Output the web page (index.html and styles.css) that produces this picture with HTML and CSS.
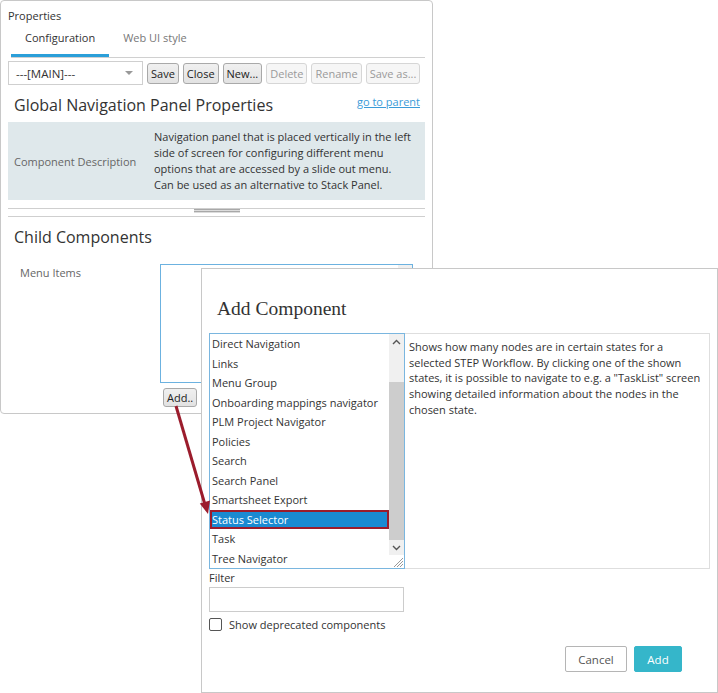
FILE: index.html
```html
<!DOCTYPE html>
<html>
<head>
<meta charset="utf-8">
<title>Properties</title>
<link rel="stylesheet" href="styles.css">
</head>
<body>
<div class="panel">
  <div class="panel-title">Properties</div>
  <div class="tabs">
    <div class="tab active">Configuration</div>
    <div class="tab">Web UI style</div>
  </div>
  <div class="toolbar">
    <div class="select"><span>---[MAIN]---</span><span class="caret"></span></div>
    <button class="btn">Save</button>
    <button class="btn">Close</button>
    <button class="btn">New...</button>
    <button class="btn disabled">Delete</button>
    <button class="btn disabled">Rename</button>
    <button class="btn disabled">Save as...</button>
  </div>
  <div class="head-row">
    <h2 class="heading">Global Navigation Panel Properties</h2>
    <a class="parent-link" href="#">go to parent</a>
  </div>
  <div class="desc-row">
    <div class="desc-label">Component Description</div>
    <div class="desc-text">Navigation panel that is placed vertically in the left<br>side of screen for configuring different menu<br>options that are accessed by a slide out menu.<br>Can be used as an alternative to Stack Panel.</div>
  </div>
  <div class="splitter"><div class="grip"></div></div>
  <h2 class="heading child-heading">Child Components</h2>
  <div class="field-row">
    <div class="field-label">Menu Items</div>
    <div class="field-col">
      <div class="textarea"><div class="ta-scroll"></div></div>
      <button class="btn add-small">Add..</button>
    </div>
  </div>
</div>

<div class="dialog">
  <div class="dialog-title">Add Component</div>
  <div class="dialog-body">
    <div class="listbox">
      <div class="items">
        <div class="item">Direct Navigation</div>
        <div class="item">Links</div>
        <div class="item">Menu Group</div>
        <div class="item">Onboarding mappings navigator</div>
        <div class="item">PLM Project Navigator</div>
        <div class="item">Policies</div>
        <div class="item">Search</div>
        <div class="item">Search Panel</div>
        <div class="item">Smartsheet Export</div>
        <div class="item selected">Status Selector</div>
        <div class="item">Task</div>
        <div class="item">Tree Navigator</div>
      </div>
      <div class="scrollbar">
        <div class="sb-btn"><svg width="9" height="6" viewBox="0 0 9 6"><polyline points="1,5 4.5,1.5 8,5" fill="none" stroke="#555" stroke-width="1.4"/></svg></div>
        <div class="sb-track"></div>
        <div class="sb-thumb"></div>
        <div class="sb-btn down"><svg width="9" height="6" viewBox="0 0 9 6"><polyline points="1,1 4.5,4.5 8,1" fill="none" stroke="#555" stroke-width="1.4"/></svg></div>
        <div class="sb-corner"><svg width="12" height="12" viewBox="0 0 12 12"><path d="M11 2 L2 11 M11 5 L5 11 M11 8 L8 11" stroke="#999" stroke-width="1"/></svg></div>
      </div>
    </div>
    <div class="info">Shows how many nodes are in certain states for a<br>selected STEP Workflow. By clicking one of the shown<br>states, it is possible to navigate to e.g. a "TaskList" screen<br>showing detailed information about the nodes in the<br>chosen state.</div>
  </div>
  <div class="filter-label">Filter</div>
  <div class="filter-input"></div>
  <label class="check-row"><span class="checkbox"></span><span>Show deprecated components</span></label>
  <div class="dialog-actions">
    <button class="action cancel">Cancel</button>
    <button class="action primary">Add</button>
  </div>
</div>

<svg class="annotation" width="718" height="693" viewBox="0 0 718 693">
  <line x1="176" y1="406" x2="204.5" y2="503" stroke="#9b1c2c" stroke-width="3"/>
  <polygon points="208,514 199.8,503.5 210,500.5" fill="#9b1c2c"/>
</svg>
</body>
</html>
```

FILE: styles.css
```css
* { box-sizing: border-box; }

body {
  margin: 0;
  width: 718px;
  height: 693px;
  position: relative;
  overflow: hidden;
  background: #fff;
  color: #333;
  font-family: "Open Sans", "Noto Sans", sans-serif;
  font-size: 11px;
}

.panel {
  width: 433px;
  height: 414px;
  border: 1px solid #c8c8c8;
  border-radius: 4px;
  padding: 5px 7px 0 7px;
}

.panel-title {
  line-height: 20px;
  color: #333;
}

.tabs {
  display: flex;
  margin-left: 3px;
  border-bottom: 1px solid #d0d0d0;
}

.tab {
  line-height: 24px;
  padding: 0 14px 4px 14px;
  border-bottom: 3px solid transparent;
  color: #777;
  font-size: 11px;
  white-space: nowrap;
}

.tab.active {
  color: #333;
  border-bottom-color: #2b9fd9;
}

.toolbar {
  display: flex;
  align-items: center;
  gap: 4px;
  margin-top: 3px;
}

.select {
  flex-shrink: 0;
  width: 135px;
  height: 24px;
  border: 1px solid #cfcfcf;
  display: flex;
  align-items: center;
  justify-content: space-between;
  padding: 0 9px 0 7px;
  font-size: 11.5px;
  color: #333;
}

.caret {
  width: 0;
  height: 0;
  border-left: 4px solid transparent;
  border-right: 4px solid transparent;
  border-top: 4px solid #999;
}

.btn {
  flex-shrink: 0;
  white-space: nowrap;
  font-family: inherit;
  font-size: 11px;
  height: 21px;
  padding: 0 3px;
  border: 1px solid #a9a9a9;
  border-radius: 3px;
  background: linear-gradient(#f0f0f0, #e2e2e2);
  color: #222;
  line-height: 19px;
}

.btn.disabled {
  border-color: #d6d6d6;
  background: #f6f6f6;
  color: #9a9a9a;
}

.head-row {
  display: flex;
  justify-content: space-between;
  align-items: flex-start;
  padding-left: 6px;
  margin-top: 9px;
}

.heading {
  margin: 0;
  font-size: 16px;
  font-weight: normal;
  line-height: 22px;
  color: #333;
}

.parent-link {
  margin-right: 5px;
  color: #3b9bd8;
  font-size: 11px;
  line-height: 16px;
}

.desc-row {
  margin-top: 6px;
  display: grid;
  grid-template-columns: 146px 1fr;
  background: #dfe8eb;
  padding: 7px 0;
}

.desc-label {
  align-self: center;
  padding-left: 6px;
  color: #666;
}

.desc-text {
  line-height: 16px;
  white-space: nowrap;
  color: #333;
}

.splitter {
  margin-top: 8px;
  height: 9px;
  border-top: 1px solid #cfcfcf;
  border-bottom: 1px solid #cfcfcf;
}

.grip {
  width: 46px;
  height: 4px;
  margin: 0 auto;
  background: repeating-linear-gradient(to bottom, #a8a8a8 0 1px, #dcdcdc 1px 2px);
}

.child-heading {
  margin-top: 9px;
  padding-left: 6px;
}

.field-row {
  display: flex;
  margin-top: 16px;
}

.field-label {
  width: 152px;
  padding-left: 12px;
  line-height: 18px;
  color: #666;
}

.field-col {
  display: flex;
  flex-direction: column;
  align-items: flex-start;
}

.textarea {
  width: 253px;
  height: 119px;
  border: 1px solid #6cb2e0;
  display: flex;
  justify-content: flex-end;
}

.ta-scroll {
  width: 14px;
  height: 15px;
  background: #f0f0f0;
}

.add-small {
  margin-top: 5px;
  margin-left: 3px;
  height: 19px;
  line-height: 17px;
}

/* dialog */
.dialog {
  position: absolute;
  left: 201px;
  top: 268px;
  width: 517px;
  height: 425px;
  background: #fff;
  border: 1px solid #c8c8c8;
  padding: 0 7px;
}

.dialog-title {
  margin-top: 28px;
  padding-left: 8px;
  font-family: "Liberation Serif", "DejaVu Serif", serif;
  font-size: 19.5px;
  line-height: 24px;
  color: #333;
  margin-bottom: 12px;
}

.dialog-body {
  display: flex;
  height: 236px;
}

.listbox {
  width: 196px;
  flex-shrink: 0;
  border: 1px solid #7ab6df;
  display: flex;
}

.items {
  flex: 1;
  color: #333;
}

.item {
  height: 19.5px;
  line-height: 19.5px;
  padding-left: 2px;
  white-space: nowrap;
}

.item.selected {
  background: #1a8ad2;
  color: #fff;
  box-shadow: inset 0 0 0 2px #9b1c2c;
}

.scrollbar {
  width: 15px;
  display: flex;
  flex-direction: column;
  background: #f0f0f0;
}

.sb-btn {
  height: 16px;
  display: flex;
  align-items: center;
  justify-content: center;
}

.sb-btn.down {
  height: 15px;
}

.sb-track {
  height: 32px;
}

.sb-thumb {
  height: 158px;
  background: #cdcdcd;
}

.sb-corner {
  height: 13px;
  background: #fff;
  display: flex;
  align-items: flex-end;
  justify-content: flex-end;
}

.info {
  flex: 1;
  border: 1px solid #dedede;
  border-left: none;
  padding: 5px 4px;
  line-height: 15.7px;
  white-space: nowrap;
  color: #333;
}

.filter-label {
  line-height: 16px;
  margin-top: 1px;
  color: #333;
}

.filter-input {
  width: 195px;
  height: 25px;
  border: 1px solid #cccccc;
  margin-top: 1px;
}

.check-row {
  display: flex;
  align-items: center;
  gap: 7px;
  margin-top: 5px;
  color: #333;
}

.checkbox {
  width: 13px;
  height: 13px;
  border: 1px solid #555;
  border-radius: 2px;
  background: #fff;
}

.dialog-actions {
  display: flex;
  justify-content: flex-end;
  gap: 7px;
  margin-top: 14px;
  padding-right: 28px;
}

.action {
  height: 26px;
  font-family: inherit;
  font-size: 11.5px;
  border-radius: 2px;
  padding: 0;
}

.action.cancel {
  width: 62px;
  background: #fff;
  border: 1px solid #b5b5b5;
  color: #555;
}

.action.primary {
  width: 48px;
  background: #35b6ca;
  border: 1px solid #35b6ca;
  color: #fff;
}

.annotation {
  position: absolute;
  left: 0;
  top: 0;
  pointer-events: none;
}
```
